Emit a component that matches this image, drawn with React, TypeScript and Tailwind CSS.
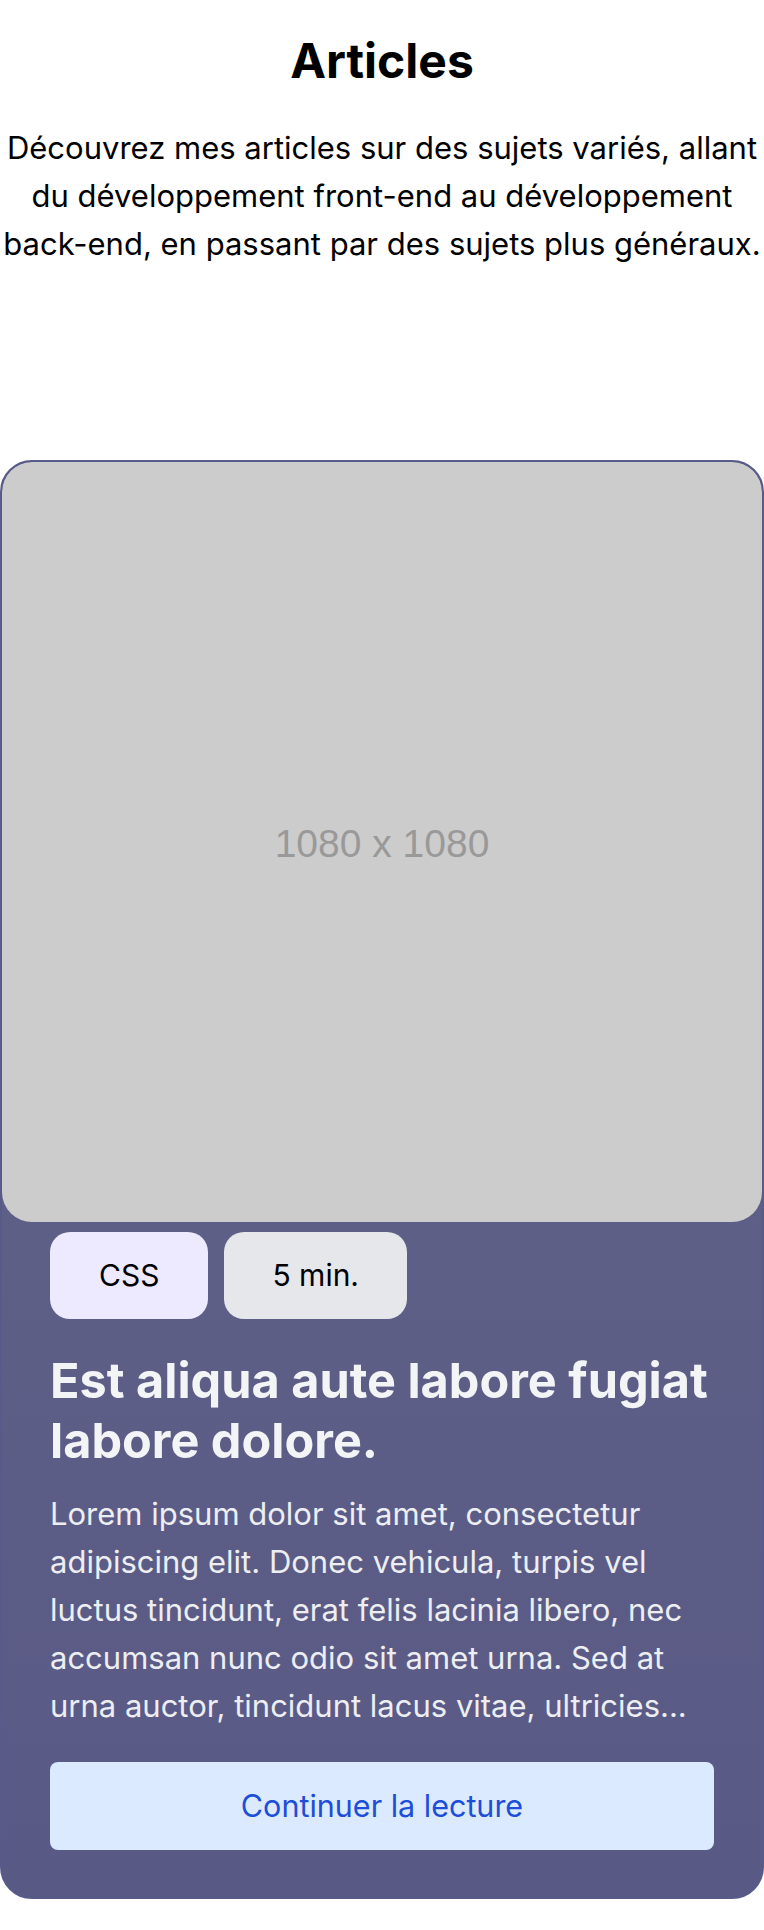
import React from 'react';

interface Article {
  tag: string;
  readTime: string;
  title: string;
  excerpt: string;
}

const article: Article = {
  tag: 'CSS',
  readTime: '5 min.',
  title: 'Est aliqua aute labore fugiat labore dolore.',
  excerpt:
    'Lorem ipsum dolor sit amet, consectetur adipiscing elit. Donec vehicula, turpis vel luctus tincidunt, erat felis lacinia libero, nec accumsan nunc odio sit amet urna. Sed at urna auctor, tincidunt lacus vitae, ultricies...',
};

const ArticleCard: React.FC<{ article: Article }> = ({ article }) => {
  return (
    <article className="rounded-[32px] border-2 border-[#585b8a] bg-gradient-to-b from-[#646687] to-[#595986] overflow-hidden">
      <div className="w-full aspect-square rounded-[30px] bg-[#cccccc] flex items-center justify-center pt-[6px]">
        <span className="text-[39px] text-[#999999] font-['Liberation_Sans',Arial,sans-serif]">1080 x 1080</span>
      </div>
      <div className="px-[48px] pb-[47px]">
        <div className="mt-[10px] flex gap-4">
          <span className="h-[87px] px-[49px] flex items-center rounded-[20px] bg-[#ede9fe] text-black text-[30px]">
            {article.tag}
          </span>
          <span className="h-[87px] px-[48px] flex items-center rounded-[20px] bg-[#e5e7eb] text-black text-[30px]">
            {article.readTime}
          </span>
        </div>
        <h2 className="mt-8 text-[48.6px] leading-[60px] font-bold text-[#f3f4f6]">{article.title}</h2>
        <p className="mt-[19px] text-[31px] leading-[48px] text-[#eceef2]">{article.excerpt}</p>
        <button className="mt-8 w-full h-[88px] rounded-lg bg-[#dbeafe] text-[#1d4ed8] text-[30.5px]">
          Continuer la lecture
        </button>
      </div>
    </article>
  );
};

export default function App() {
  return (
    <div className="w-[764px] bg-white font-['Inter',sans-serif] pb-[33px]">
      <header className="pt-8 text-center">
        <h1 className="text-[48px] leading-[1.2] font-bold text-black">Articles</h1>
        <p className="mt-[34px] text-[31px] leading-[48px] text-black">
          Découvrez mes articles sur des sujets variés, allant du développement front-end au développement
          back-end, en passant par des sujets plus généraux.
        </p>
      </header>
      <section className="mt-[192px]">
        <ArticleCard article={article} />
      </section>
    </div>
  );
}
